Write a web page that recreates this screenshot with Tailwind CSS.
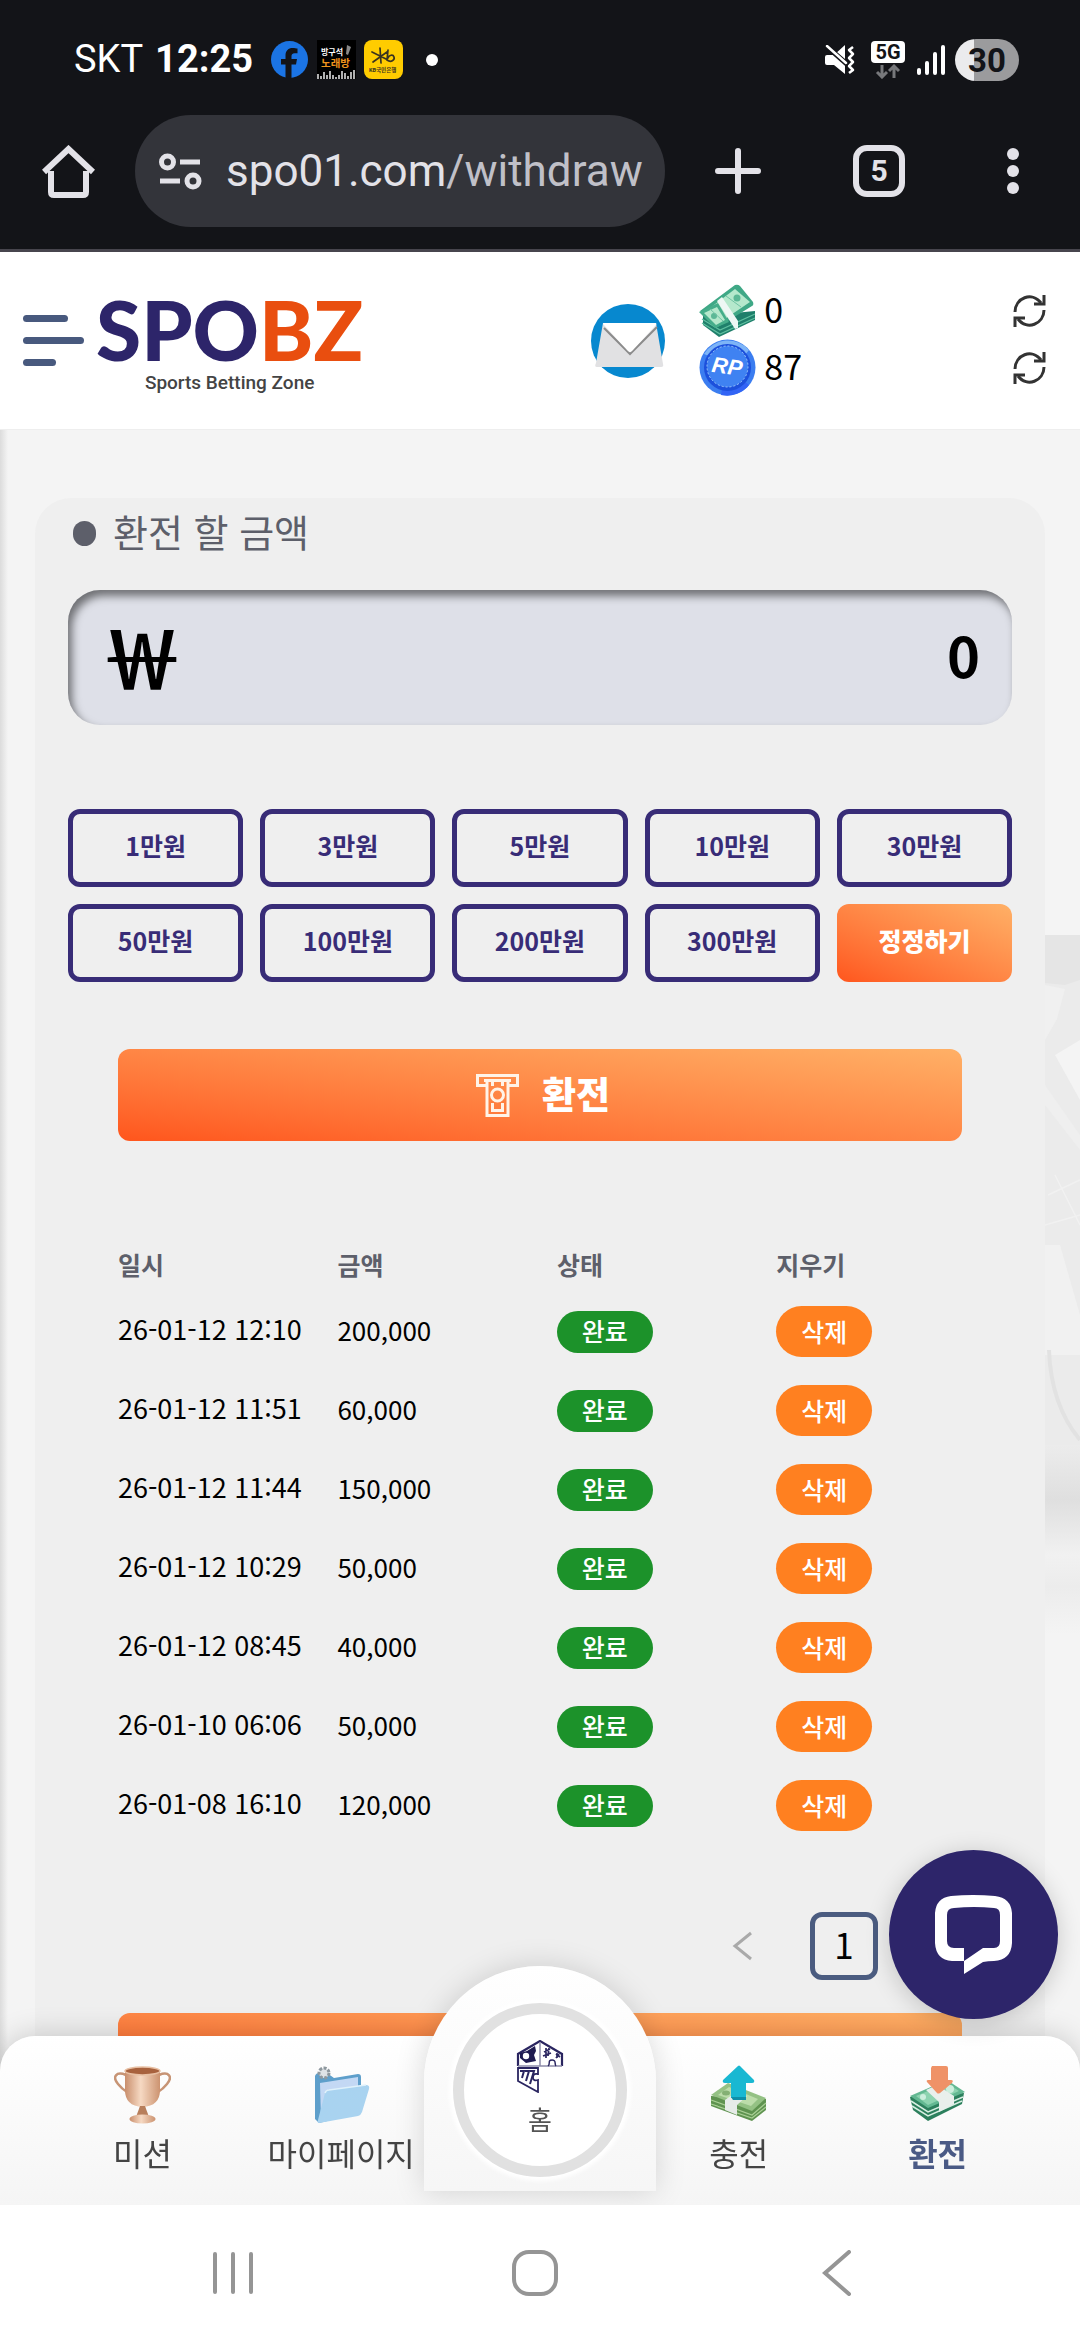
<!DOCTYPE html>
<html lang="ko">
<head>
  <meta charset="UTF-8">
  <meta name="viewport" content="width=device-width, initial-scale=1">
  <title>SPOBZ - 환전</title>
  <script src="https://cdn.jsdelivr.net/npm/@tailwindcss/browser@4"></script>
</head>
<body class="bg-[#f4f4f4] text-black font-['Noto_Sans_CJK_KR',sans-serif] min-h-screen flex flex-col overflow-x-hidden">

  <!-- Status bar + browser toolbar -->
  <div class="bg-[#131418] border-b-3 border-[#47454d] font-[Roboto,'Noto_Sans_CJK_KR',sans-serif]">
    <div class="h-[115px] pl-[74px] pr-[61px] pt-1 flex items-center justify-between text-white">
      <div class="flex items-center">
        <span class="text-[38px] mr-[12px]">SKT</span>
        <span class="text-[38px] font-bold mr-[18px]">12:25</span>
        <svg class="w-[37px] h-[37px] mr-[9px]" viewBox="0 0 37 37">
          <circle cx="18.500" cy="18.500" r="18.500" fill="#1b74e4"/>
          <path d="M14.500 37V23.500H10V18h4.500v-3.500c0-5 3-7.500 7-7.500 2 0 4 .3 5 .6v4.700h-2.800c-2.500 0-3.200 1.400-3.200 3V18h5.500l-1 5.500h-4.500V37z" fill="#131418"/>
        </svg>
        <svg class="w-[39px] h-[39px] mr-[8px]" viewBox="0 0 39 39">
          <rect width="39" height="39" fill="#000"/>
          <text x="4" y="15" font-size="8" font-weight="700" fill="#fff">방구석</text>
          <text x="4" y="27" font-size="10.500" font-weight="700" fill="#f0941d">노래방</text>
          <path d="M30 5l4 2-3 8-2-1z" fill="#888"/>
          <path d="M1 39v-5M4 39v-3M7 39v-7M10 39v-4M13 39v-8M16 39v-4M19 39v-2M22 39v-4M25 39v-8M28 39v-6M31 39v-3M34 39v-7M37 39v-9" stroke="#ddd" stroke-width="1.600"/>
        </svg>
        <svg class="w-[39px] h-[39px] mr-[23px]" viewBox="0 0 39 39">
          <rect width="39" height="39" rx="8" fill="#ffcc00"/>
          <path d="M8 12l14 7M9 22l14-10M16 8l1 15M24 10l-1 10c4 3 8 0 7-3s-5-2-6 1" fill="none" stroke="#3a3320" stroke-width="1.700" stroke-linecap="round"/>
          <text x="5" y="32" font-size="5.500" font-weight="700" fill="#3a3320">KB국민은행</text>
        </svg>
        <span class="w-[12px] h-[12px] rounded-full bg-white"></span>
      </div>
      <div class="flex items-center">
        <svg class="w-[30px] h-[30px] mr-[16px]" viewBox="0 0 30 30">
          <path d="M0 12q0-2 2-2h7L20 0v29L9 20H2q-2 0-2-2z" fill="#fff"/>
          <path d="M28 2l-4 3 4 4-4 4 4 4-4 4 4 4-4 3" fill="none" stroke="#fff" stroke-width="2.500" stroke-linejoin="round"/>
          <path d="M-1-1l24 21" stroke="#131418" stroke-width="5"/>
          <path d="M2 1l19 17" stroke="#fff" stroke-width="2.500" stroke-linecap="round"/>
        </svg>
        <svg class="w-[34px] h-[38px] mr-[12px]" viewBox="0 0 34 38">
          <rect width="34" height="22" rx="4" fill="#fff"/>
          <text x="17" y="18" font-size="20" font-weight="700" fill="#131418" text-anchor="middle">5G</text>
          <path d="M11 24v12M6 31l5 5 5-5M23 37V25M18 30l5-5 5 5" fill="none" stroke="#77787b" stroke-width="3"/>
        </svg>
        <svg class="w-[28px] h-[30px] mr-[10px]" viewBox="0 0 28 30">
          <path d="M2 25v3M10 18v10M18 9v19M26 2v26" stroke="#fff" stroke-width="4" stroke-linecap="round"/>
        </svg>
        <span class="w-[64px] h-[42px] rounded-full bg-linear-to-r from-[#ebebed] from-30% to-[#9b9b9d] to-30% text-[#131418] text-[33px] leading-[43px] font-bold text-center">30</span>
      </div>
    </div>

    <div class="flex items-center pl-[42px] pr-[61px] pb-[22px] text-[#e3e2e8]">
      <button aria-label="홈페이지" class="mr-[40px]">
        <svg class="w-[53px] h-[53px]" viewBox="0 0 53 53">
          <path d="M9 26v21q0 3 3 3h29q3 0 3-3V26" fill="none" stroke="currentColor" stroke-width="6"/>
          <path d="M2 27L26.500 4 51 27" fill="none" stroke="currentColor" stroke-width="6"/>
        </svg>
      </button>
      <div class="flex-1 min-w-0 h-[112px] rounded-full bg-[#33343a] flex items-center pl-[24px] pr-[20px]">
        <button aria-label="사이트 정보" class="mr-[24px]">
          <svg class="w-[43px] h-[37px]" viewBox="0 0 43 37">
            <g fill="none" stroke="currentColor" stroke-width="5">
              <circle cx="8.500" cy="9" r="6"/>
              <path d="M21 9h20M1 28h20"/>
              <circle cx="34" cy="28" r="6"/>
            </g>
          </svg>
        </button>
        <button aria-label="주소" class="flex-1 min-w-0 overflow-hidden whitespace-nowrap text-left text-[44px] leading-[60px]">spo01.com<span class="text-[#c0c0c8]">/withdraw</span></button>
      </div>
      <button aria-label="새 탭" class="ml-[50px]">
        <svg class="w-[46px] h-[46px]" viewBox="0 0 46 46">
          <path d="M23 3v40M3 23h40" stroke="currentColor" stroke-width="6" stroke-linecap="round"/>
        </svg>
      </button>
      <button class="ml-[92px] w-[52px] h-[52px] border-6 border-current rounded-[14px] text-[30px] leading-[40px] font-bold">5</button>
      <button aria-label="메뉴" class="ml-[102px]">
        <svg class="w-[12px] h-[48px]" viewBox="0 0 12 48" fill="currentColor">
          <circle cx="6" cy="7" r="6"/><circle cx="6" cy="24" r="6"/><circle cx="6" cy="41" r="6"/>
        </svg>
      </button>
    </div>
  </div>

  <!-- Site header -->
  <header class="bg-white h-[178px] flex items-center pl-[23px] pr-[34px] border-b border-[#eeeeee]">
    <div class="w-5/9 flex items-center">
      <button aria-label="메뉴 열기" class="flex flex-col gap-[15px] mr-[12px]">
        <span class="w-[45px] h-[7px] rounded-full bg-[#48597e]"></span>
        <span class="w-[61px] h-[7px] rounded-full bg-[#48597e]"></span>
        <span class="w-[33px] h-[7px] rounded-full bg-[#48597e]"></span>
      </button>
      <a href="#" class="flex flex-col items-center">
        <span class="font-[Lato,sans-serif] font-black text-[82px] leading-[84px] text-[#2d256a]">SPO<span class="text-[#e94e0f]">BZ</span></span>
        <span class="font-[Roboto,sans-serif] font-medium text-[19px] leading-[24px] text-[#444444]">Sports Betting Zone</span>
      </a>
    </div>
    <a href="#" aria-label="쪽지" class="mr-[34px]">
      <svg class="w-[74px] h-[74px]" viewBox="0 0 74 74">
        <circle cx="37" cy="37" r="37" fill="#0788cf"/>
        <path d="M12 19h53l7 41q1 3-2 3H6q-3 0-1-4z" fill="#e1e1e3"/>
        <path d="M13 24l26 26 27-27" fill="none" stroke="#8b8b8b" stroke-width="2"/>
        <path d="M12 20q0-1 1-1h51q2 0 1 2L41 47q-2 2-4 0z" fill="#fff"/>
      </svg>
    </a>
    <div class="flex-1 flex flex-col pb-[2px] text-[34px] leading-[52px]">
      <div class="flex items-center">
        <svg class="w-[57px] h-[54px] mr-[8px]" viewBox="0 0 57 54">
          <path d="M4 32v9l16 12 36-17v-9z" fill="#1f7f6b"/>
          <path d="M3 35l18 11 35-16M3 39l18 11 35-16" fill="none" stroke="#5fc0a0" stroke-width="1.200"/>
          <path d="M1 27L36 1q3-1 5 1l13 16q1 3-1 4L19 43z" fill="#3fa886"/>
          <path d="M7 27L36 5l15 13-31 21z" fill="#b5e8cc"/>
          <path d="M0 28l19-9 11 19-14 6z" fill="#45ad8a"/>
          <path d="M5 29l13-6 8 13-9 5z" fill="#b5e8cc"/>
          <circle cx="38" cy="14" r="3.500" fill="#5cb896"/>
          <circle cx="15" cy="32" r="3" fill="#5cb896"/>
          <path d="M11 25l13 12M27 12l15 11" stroke="#70c3a4" stroke-width="1"/>
          <path d="M18 17l5-4 16 24v7l-3 1z" fill="#eef7f4"/>
        </svg>
        <span class="pb-[4px]">0</span>
        <button aria-label="머니 새로고침" class="ml-auto">
          <svg class="w-[33px] h-[34px]" viewBox="0 0 33 34" fill="none" stroke="#333333" stroke-width="3">
            <path d="M2 18C2 4 19-3 28 9M31 16c0 14-17 21-26 9"/>
            <path d="M31 1v9H21M2 33v-9h10"/>
          </svg>
        </button>
      </div>
      <div class="flex items-center">
        <svg class="w-[57px] h-[57px] mr-[8px]" viewBox="0 0 57 57">
          <circle cx="28.500" cy="28.500" r="28" fill="#3b7df0"/>
          <path d="M5 15A28 28 0 0 1 50 11L45 17A22 22 0 0 0 10 17z" fill="#7db4f7"/>
          <path d="M50 46A28 28 0 0 1 22 56l1-6a22 22 0 0 0 22-8z" fill="#3264f5"/>
          <circle cx="28.500" cy="28.500" r="23.500" fill="#1c50dc"/>
          <circle cx="28.500" cy="27.500" r="20.500" fill="#3f82f2" stroke="#9cc6fb" stroke-width="1" stroke-dasharray="2 2"/>
          <text x="28" y="35" font-family="Liberation Sans" font-size="22" font-weight="700" font-style="italic" fill="#fff" text-anchor="middle" transform="rotate(8 28 28)">RP</text>
        </svg>
        <span class="pb-[4px]">87</span>
        <button aria-label="포인트 새로고침" class="ml-auto">
          <svg class="w-[33px] h-[34px]" viewBox="0 0 33 34" fill="none" stroke="#333333" stroke-width="3">
            <path d="M2 18C2 4 19-3 28 9M31 16c0 14-17 21-26 9"/>
            <path d="M31 1v9H21M2 33v-9h10"/>
          </svg>
        </button>
      </div>
    </div>
  </header>

  <!-- Withdraw form -->
  <main class="relative flex-1 px-[35px] pt-[68px]">
    <!-- faint background artwork at the page edge -->
    <svg class="absolute right-0 top-[505px] w-[35px] h-[700px]" viewBox="0 0 35 700" preserveAspectRatio="none">
      <defs>
        <linearGradient id="fade" x2="0" y2="1"><stop stop-color="#ececec"/><stop offset=".5" stop-color="#dfdfdf"/><stop offset="1" stop-color="#f1f1f1"/></linearGradient>
        <linearGradient id="tail" x2="0" y2="1"><stop stop-color="#f1f1f1"/><stop offset=".4" stop-color="#ececec"/><stop offset="1" stop-color="#f4f4f4"/></linearGradient>
      </defs>
      <rect width="35" height="600" fill="#ebebeb"/>
      <path d="M0 0h35v45l-15 5L0 48z" fill="#e5e5e5"/>
      <path d="M0 50l20 4-8 30L0 105z" fill="#f0f0f0"/>
      <path d="M35 105L10 120l25 45z" fill="#f4f4f4"/>
      <path d="M0 150l35 50v15L0 170z" fill="#efefef"/>
      <path d="M3 260l32-15M10 240l25 50M0 290l35-10" stroke="#f1f1f1" stroke-width="1.500"/>
      <path d="M0 310h15l20 70v40H0z" fill="#f1f1f1"/>
      <path d="M4 415q2 55 31 90" fill="none" stroke="#e2e2e2" stroke-width="4"/>
      <path d="M0 510h35v110H0z" fill="url(#fade)"/>
      <path d="M0 620h35v80H0z" fill="url(#tail)"/>
    </svg>

    <div class="relative rounded-t-[36px] bg-[#efefef] px-[33px] pt-[15px]">
      <label for="amount" class="flex items-center h-[40px] pl-[5px] text-[38px] leading-[40px] text-[#5d5f6a]">
        <span class="w-[23px] h-[25px] rounded-full bg-[#5d5f6a] mr-[17px]"></span>
        <span class="pb-[4px]">환전 할 금액</span>
      </label>
      <div class="mt-[37px] h-[135px] rounded-[32px] bg-[#dee0e8] shadow-[inset_4px_6px_8px_#00000080] flex items-center pl-[34px] pr-[32px] pb-[8px]">
        <span class="font-bold text-[80px] leading-[120px]">￦</span>
        <input id="amount" type="text" inputmode="numeric" value="0" class="flex-1 min-w-0 text-right text-[56px] leading-[80px] font-bold focus:outline-none">
      </div>

      <div class="mt-[84px] grid grid-cols-5 gap-[17px] text-[25px] font-bold text-[#382c77]">
        <button class="h-[78px] pb-1 border-5 border-[#382c77] rounded-xl">1만원</button>
        <button class="h-[78px] pb-1 border-5 border-[#382c77] rounded-xl">3만원</button>
        <button class="h-[78px] pb-1 border-5 border-[#382c77] rounded-xl">5만원</button>
        <button class="h-[78px] pb-1 border-5 border-[#382c77] rounded-xl">10만원</button>
        <button class="h-[78px] pb-1 border-5 border-[#382c77] rounded-xl">30만원</button>
        <button class="h-[78px] pb-1 border-5 border-[#382c77] rounded-xl">50만원</button>
        <button class="h-[78px] pb-1 border-5 border-[#382c77] rounded-xl">100만원</button>
        <button class="h-[78px] pb-1 border-5 border-[#382c77] rounded-xl">200만원</button>
        <button class="h-[78px] pb-1 border-5 border-[#382c77] rounded-xl">300만원</button>
        <button class="h-[78px] pb-1 rounded-xl bg-linear-to-tr from-[#ff551c] to-[#ffb066] font-black text-white">정정하기</button>
      </div>

      <div class="px-[50px]">
        <button class="mt-[67px] w-full h-[92px] rounded-xl bg-linear-to-tr from-[#ff551c] to-[#ffb066] text-white flex items-center justify-center gap-[23px] pl-[6px]">
          <svg class="w-[43px] h-[43px]" viewBox="0 0 43 43" fill="none" stroke="#fff3e8" stroke-width="3">
            <path d="M10 11.500H1.500v-10h40v10H33"/>
            <path d="M8 6.500h27M11 7v34.500h21V7"/>
            <path d="M16.500 7v5M26.500 7v5M16.500 29v7.500h10V29"/>
            <circle cx="21.500" cy="21" r="6"/>
          </svg>
          <span class="text-[37px] leading-[44px] pb-1 font-black">환전</span>
        </button>

        <table class="mt-[101px] w-full table-fixed text-left text-[26px]">
          <thead class="text-[25px] text-[#5d5f6a]">
            <tr class="h-[50px]">
              <th class="w-[26%] pb-[4px] font-bold">일시</th>
              <th class="w-[26%] pb-[4px] font-bold">금액</th>
              <th class="w-[26%] pb-[4px] font-bold">상태</th>
              <th class="pb-[4px] font-bold">지우기</th>
            </tr>
          </thead>
          <tbody id="history"></tbody>
        </table>

        <div class="mt-[67px] flex justify-end items-center gap-[52px]">
          <button aria-label="이전" class="w-[32px] flex justify-center">
            <svg class="w-[20px] h-[30px]" viewBox="0 0 20 30" fill="none" stroke="#a9a9a9" stroke-width="3"><path d="M19 2L3 15l16 13"/></svg>
          </button>
          <button class="w-[68px] h-[68px] pb-[4px] border-5 border-[#4b5c80] rounded-xl text-[35px] leading-[54px]">1</button>
          <button aria-label="다음" class="w-[32px] flex justify-center">
            <svg class="w-[20px] h-[30px]" viewBox="0 0 20 30" fill="none" stroke="#a9a9a9" stroke-width="3"><path d="M1 2l16 13L1 28"/></svg>
          </button>
        </div>

        <button aria-label="전체 삭제" class="mt-[33px] block w-full h-[92px] rounded-xl bg-linear-to-tr from-[#ff551c] to-[#ffb066]"></button>
      </div>
      <div class="h-[200px]"></div>
    </div>
    <div class="absolute inset-y-0 left-0 w-[8px] bg-linear-to-r from-black/10 to-transparent"></div>
  </main>

  <!-- Chat -->
  <button aria-label="채팅 상담" class="fixed z-20 right-[22px] bottom-[321px] w-[169px] h-[169px] rounded-full bg-[#2d256a] shadow-[0_4px_24px_#00000030] flex items-center justify-center">
    <svg class="w-[79px] h-[79px]" viewBox="0 0 79 79">
      <path d="M17 1q22-2 44 0 16 2 17 17v30q-1 17-18 18-6 0-11 1L30 79V66H18Q2 65 1 48V18Q2 3 17 1zM20 13q-7 0-7 7v26q0 7 7 7h10v13l19-13h11q6 0 6-7V20q0-7-6-7-20-2-40 0z" fill="#fff" fill-rule="evenodd"/>
    </svg>
  </button>

  <!-- Bottom tabs + system navigation -->
  <div class="fixed inset-x-0 bottom-0 z-10">
    <nav class="relative h-[169px] rounded-t-[35px] bg-linear-to-b from-white to-[#f5f5f5] shadow-[0_0_30px_#00000030] flex px-[43px] text-[32px] leading-[40px] text-[#444444]">
      <a href="#" class="flex-1 flex flex-col items-center pt-[28px] gap-[8px] whitespace-nowrap">
        <svg class="w-[57px] h-[60px]" viewBox="0 0 57 60">
          <defs>
            <linearGradient id="cup"><stop stop-color="#c98e6c"/><stop offset=".45" stop-color="#f6d9c3"/><stop offset="1" stop-color="#cc9370"/></linearGradient>
          </defs>
          <path d="M12 11C2 7-2 13 4 20q4 5 9 8M45 11c10-4 14 2 8 9q-4 5-9 8" fill="none" stroke="#c79475" stroke-width="2.500"/>
          <path d="M11 6h35v20q0 16-17.500 17Q11 42 11 26z" fill="url(#cup)"/>
          <ellipse cx="28.500" cy="7" rx="17.500" ry="4" fill="#a8623e" stroke="#e8c0a4" stroke-width="1.500"/>
          <path d="M26 42h5l4 11H22z" fill="#b87f5c"/>
          <ellipse cx="28.500" cy="55" rx="13" ry="4.500" fill="url(#cup)"/>
        </svg>
        미션
      </a>
      <a href="#" class="flex-1 flex flex-col items-center pt-[28px] gap-[8px] whitespace-nowrap">
        <svg class="w-[57px] h-[60px]" viewBox="0 0 57 60">
          <path d="M2 12q1-3 4-3h8l7 5 24-4q3 0 3 3v36L6 59l-4-4z" fill="#5e9fcb"/>
          <path d="M7 19l38-6v34L8 55z" fill="#c3d8f4"/>
          <path d="M12 29q1-3 4-3l37-5q4 0 3 4l-7 23q-1 3-4 4L6 59q-2 0-1-3z" fill="#a9d3f0"/>
          <path d="M12 29q1-3 4-3l37-5" fill="none" stroke="#dff1fb" stroke-width="1.500"/>
          <circle cx="11" cy="9" r="5" fill="#dfe3e6" stroke="#8e989e" stroke-width="3" stroke-dasharray="3 1.500"/>
        </svg>
        마이페이지
      </a>
      <div class="flex-1"></div>
      <a href="#" class="flex-1 flex flex-col items-center pt-[28px] gap-[8px] whitespace-nowrap">
        <svg class="w-[57px] h-[60px]" viewBox="0 0 57 60">
          <path d="M1 32v10l41 15 14-11V35z" fill="#5f9350"/>
          <path d="M1 36l41 15 14-12M1 40l41 14 14-11" fill="none" stroke="#a9cf95" stroke-width="1.200"/>
          <path d="M1 31l17-12 38 15-14 13z" fill="#94c184"/>
          <path d="M8 31l11-8 29 12-7 7z" fill="#bcdcaa"/>
          <ellipse cx="16" cy="29" rx="4" ry="2.500" fill="#84b074"/>
          <path d="M15 36l11-8 11 4-10 9v10l-12-5z" fill="#e6ebe8"/>
          <path d="M28 2q1-1 2 0l14 14q1 3-2 3h-6v15H21V19h-6q-3 0-2-3z" fill="#19b8d2"/>
          <path d="M21 33h15v3H23z" fill="#0f8fa8"/>
        </svg>
        충전
      </a>
      <a href="#" class="flex-1 flex flex-col items-center pt-[28px] gap-[8px] whitespace-nowrap font-bold text-[#4a5a85]">
        <svg class="w-[57px] h-[60px]" viewBox="0 0 57 60">
          <path d="M1 33l3 13 15 11 34-17 2-11z" fill="#2c805d"/>
          <path d="M2 37l17 11 35-15M3 42l16 10 34-15" fill="none" stroke="#d7eee2" stroke-width="1.500"/>
          <path d="M1 32l37-16 18 12-37 16z" fill="#63b892"/>
          <path d="M7 32l31-13 12 8-31 14z" fill="#8dd3b0"/>
          <circle cx="41" cy="25" r="4" fill="#cdeedd"/><circle cx="14" cy="33" r="3" fill="#cdeedd"/>
          <path d="M17 26l11-5 17 11v8l-15 8V38z" fill="#e9efec"/>
          <path d="M23 2h14q2 0 2 2v12h3q3 0 1 3L31 29q-2 1-3 0L18 18q-1-2 1-2h3V4z" fill="#ef9267"/>
        </svg>
        환전
      </a>

      <a href="#" class="absolute left-1/2 -translate-x-1/2 bottom-[14px] w-[232px] h-[225px] rounded-t-[116px] bg-linear-to-b from-white to-[#f6f6f6] shadow-[0_0_30px_#00000026] flex flex-col items-center pt-[37px]">
        <span class="w-[174px] h-[174px] rounded-full border-11 border-[#e1e1e1] bg-white shadow-[0_0_4px_4px_#ffffff] flex flex-col items-center pt-[26px] text-[26px] leading-[30px] text-[#555555]">
          <svg class="w-[48px] h-[53px] mb-[11px]" viewBox="0 0 48 53">
            <path d="M2 26V14L24 1l22 13v12" fill="none" stroke="#2a2560" stroke-width="2.200"/>
            <path d="M2 26h44" stroke="#8d8ba8" stroke-width="1.500"/>
            <path d="M24 2v24" stroke="#8d8ba8" stroke-width="1.500"/>
            <path d="M4 13l7-2 8-5 1 5-2 4 2 6-5 1-5 1-6-5z" fill="#1f1b50"/>
            <circle cx="10" cy="16" r="3.200" fill="#fff"/>
            <path d="M28 12l6-3M27 16l8-3M30 8v10M33 8l-1 8M40 14l4 3M43 14l-3 4M41 13v5" stroke="#2a2560" stroke-width="1.700"/>
            <path d="M32 26c3-2-1-6 4-6s2 4 4 6" fill="none" stroke="#2a2560" stroke-width="1.500"/>
            <path d="M2 28h20v6c-5-1-5 2-5 4s2 3 5 2v12L2 41z" fill="none" stroke="#2a2560" stroke-width="1.800"/>
            <path d="M4 31h4l-2 7M9 31h4l-3 10M14 31h4l-4 13" fill="none" stroke="#2a2560" stroke-width="2"/>
          </svg>
          홈
        </span>
      </a>
    </nav>
    <div class="relative h-[135px] bg-white grid grid-cols-3 items-center justify-items-center pl-[82px] pr-[92px]">
      <button aria-label="최근 앱"><svg class="w-[40px] h-[44px]" viewBox="0 0 40 44" stroke="#959595" stroke-width="4" stroke-linecap="round"><path d="M2 3v38M20 3v38M38 3v38"/></svg></button>
      <button aria-label="홈 화면"><svg class="w-[46px] h-[46px]" viewBox="0 0 46 46" fill="none" stroke="#959595" stroke-width="4"><rect x="2" y="2" width="42" height="42" rx="15"/></svg></button>
      <button aria-label="뒤로"><svg class="w-[30px] h-[46px]" viewBox="0 0 30 46" fill="none" stroke="#959595" stroke-width="4" stroke-linecap="round"><path d="M27 2L3 23l24 21"/></svg></button>
    </div>
  </div>

  <script>
    const history_rows = [
      ["26-01-12 12:10", "200,000"],
      ["26-01-12 11:51", "60,000"],
      ["26-01-12 11:44", "150,000"],
      ["26-01-12 10:29", "50,000"],
      ["26-01-12 08:45", "40,000"],
      ["26-01-10 06:06", "50,000"],
      ["26-01-08 16:10", "120,000"]
    ];

    document.getElementById("history").innerHTML = history_rows.map(([date, amount]) => `
      <tr class="h-[79px]">
        <td class="pb-[4px] text-[27px] whitespace-nowrap">${date}</td>
        <td class="pb-[4px]">${amount}</td>
        <td><span class="block w-[96px] h-[42px] rounded-full bg-[#1c922a] text-white text-[25px] leading-[38px] font-medium text-center">완료</span></td>
        <td><button class="block w-[96px] h-[51px] rounded-full bg-[#ff8020] text-white text-[25px] leading-[47px] font-medium text-center">삭제</button></td>
      </tr>`).join("");
  </script>
</body>
</html>
